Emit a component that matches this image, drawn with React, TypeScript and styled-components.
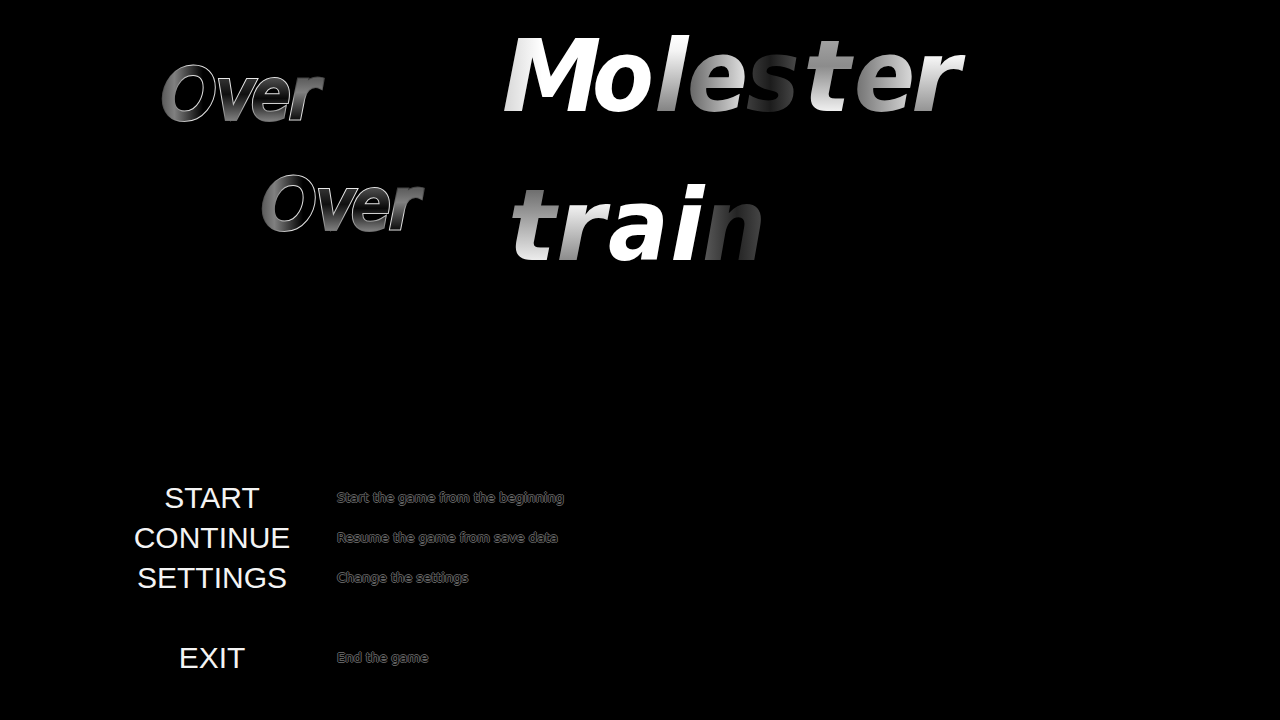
import React, { useId } from "react";
import styled, { createGlobalStyle } from "styled-components";

const GlobalStyle = createGlobalStyle`
  * { box-sizing: border-box; }
  html, body { margin: 0; background: #000; }
`;

const Screen = styled.main`
  display: flex;
  flex-direction: column;
  justify-content: space-between;
  min-height: 100vh;
  background: #000;
  color: #f4f4f4;
`;

const Header = styled.header`
  display: flex;
  gap: 50px;
  padding: 20px 0 0 150px;
`;

const Subtitle = styled.div`
  display: flex;
  flex-direction: column;
  gap: 20px;
  padding-top: 30px;
`;

const Title = styled.h1`
  display: flex;
  flex-direction: column;
  gap: 30px;
  margin: 0;
`;

const Wordmark = styled.svg<{ $indent?: number; $light?: boolean }>`
  display: block;
  overflow: visible;
  margin-left: ${(p) => p.$indent ?? 0}px;
  font-style: italic;
  font-weight: ${(p) => (p.$light ? 400 : 700)};
`;

const Glyph = styled.text<{ $wide?: boolean }>`
  font-family: ${(p) => (p.$wide ? '"DejaVu Sans"' : '"DejaVu Sans Condensed", "DejaVu Sans"')}, sans-serif;
  font-stretch: ${(p) => (p.$wide ? "normal" : "condensed")};
`;

const Menu = styled.nav`
  padding: 0 0 42px 112px;
`;

const Entry = styled.div<{ $spaced?: boolean }>`
  display: grid;
  grid-template-columns: 200px 1fr;
  column-gap: 25px;
  align-items: center;
  height: 40px;
  margin-top: ${(p) => (p.$spaced ? 40 : 0)}px;
`;

const Command = styled.button`
  border: 0;
  padding: 0;
  background: none;
  color: inherit;
  font: 30px/40px "Liberation Sans", Arial, sans-serif;
  cursor: pointer;
`;

const Hint = styled.span`
  color: #000;
  font: 400 13px/20px "DejaVu Sans", sans-serif;
  text-shadow: 1px 0 #606060, -1px 0 #606060, 0 1px #606060, 0 -1px #606060;
`;

type Stop = [number, string];
interface Letter {
  char: string;
  x: number;
  dir: "h" | "v";
  from: number;
  to: number;
  fill: Stop[];
  edge?: Stop[];
  wide?: boolean;
}

const Stops = ({ list }: { list: Stop[] }) => (
  <>
    {list.map(([offset, color]) => (
      <stop key={offset} offset={`${offset}%`} stopColor={color} />
    ))}
  </>
);

function Letters({ letters, size, baseline }: { letters: Letter[]; size: number; baseline: number }) {
  const id = useId();
  return (
    <>
      {letters.map((l, i) => {
        const span =
          l.dir === "h"
            ? { x1: l.from, x2: l.to, y1: 0, y2: 0 }
            : { x1: 0, x2: 0, y1: l.from, y2: l.to };
        const fill = `url(#${id}f${i})`;
        const glyph = { x: l.x, y: baseline, fontSize: size, $wide: l.wide };
        return (
          <g key={i}>
            <linearGradient id={`${id}f${i}`} gradientUnits="userSpaceOnUse" {...span}>
              <Stops list={l.fill} />
            </linearGradient>
            {l.edge && (
              <>
                <linearGradient id={`${id}e${i}`} gradientUnits="userSpaceOnUse" {...span}>
                  <Stops list={l.edge} />
                </linearGradient>
                <Glyph {...glyph} aria-hidden="true" fill="none" stroke={`url(#${id}e${i})`} strokeWidth={6}>
                  {l.char}
                </Glyph>
              </>
            )}
            <Glyph {...glyph} fill={fill} stroke={l.edge ? fill : "none"} strokeWidth={4}>
              {l.char}
            </Glyph>
          </g>
        );
      })}
    </>
  );
}

const WHITE: Stop[] = [[0, "#fff"], [100, "#fff"]];

const molester: Letter[] = [
  { char: "M", x: 12, wide: true, dir: "h", from: 15, to: 108, fill: [[0, "#d8d8d8"], [40, "#fff"]] },
  { char: "o", x: 102, dir: "h", from: 0, to: 1, fill: WHITE },
  { char: "l", x: 164, wide: true, dir: "v", from: 16, to: 91, fill: [[0, "#fff"], [20, "#f4f4f4"], [100, "#848484"]] },
  { char: "e", x: 197, dir: "h", from: 200, to: 255, fill: [[0, "#686868"], [100, "#e0e0e0"]] },
  { char: "s", x: 256, dir: "h", from: 255, to: 311, fill: [[0, "#404040"], [45, "#1c1c1c"], [100, "#505050"]] },
  { char: "t", x: 313, wide: true, dir: "v", from: 22, to: 91, fill: [[0, "#a0a0a0"], [35, "#8c8c8c"], [100, "#f0f0f0"]] },
  { char: "e", x: 364, dir: "h", from: 367, to: 422, fill: [[0, "#747474"], [100, "#d8d8d8"]] },
  { char: "r", x: 421, wide: true, dir: "v", from: 38, to: 91, fill: [[0, "#f4f4f4"], [100, "#949494"]] },
];

const train: Letter[] = [
  { char: "t", x: 18, wide: true, dir: "v", from: 21, to: 90, fill: [[0, "#707070"], [100, "#ececec"]] },
  { char: "r", x: 66, wide: true, dir: "v", from: 36, to: 90, fill: [[0, "#f0f0f0"], [100, "#8c8c8c"]] },
  { char: "a", x: 118, dir: "h", from: 0, to: 1, fill: WHITE },
  { char: "i", x: 180, wide: true, dir: "h", from: 0, to: 1, fill: WHITE },
  { char: "n", x: 212, dir: "h", from: 215, to: 273, fill: [[0, "#585858"], [55, "#242424"], [100, "#484848"]] },
];

const over: Letter[] = [
  {
    char: "O", x: 12, wide: true, dir: "h", from: 14, to: 66,
    fill: [[0, "#606060"], [20, "#808080"], [75, "#000"]],
    edge: [[0, "#505050"], [20, "#808080"], [50, "#e0e0e0"]],
  },
  {
    char: "v", x: 67, dir: "v", from: 30, to: 71,
    fill: [[0, "#303030"], [35, "#101010"], [100, "#808080"]],
    edge: [[0, "#e8e8e8"], [50, "#d0d0d0"], [100, "#707070"]],
  },
  {
    char: "e", x: 102, dir: "v", from: 30, to: 71,
    fill: [[0, "#484848"], [45, "#080808"], [100, "#808080"]],
    edge: [[0, "#e0e0e0"], [50, "#e0e0e0"], [100, "#707070"]],
  },
  {
    char: "r", x: 140, wide: true, dir: "v", from: 30, to: 71,
    fill: [[0, "#606060"], [30, "#808080"], [100, "#080808"]],
    edge: [[0, "#404040"], [30, "#707070"], [60, "#e0e0e0"]],
  },
];

const entries = [
  { label: "START", hint: "Start the game from the beginning" },
  { label: "CONTINUE", hint: "Resume the game from save data" },
  { label: "SETTINGS", hint: "Change the settings" },
  { label: "EXIT", hint: "End the game", spaced: true },
];

export default function App() {
  return (
    <>
      <GlobalStyle />
      <Screen>
        <Header>
          <Subtitle>
            <Wordmark width={190} height={90} $light>
              <Letters letters={over} size={68} baseline={68} />
            </Wordmark>
            <Wordmark width={190} height={90} $indent={100} $light>
              <Letters letters={over} size={68} baseline={68} />
            </Wordmark>
          </Subtitle>
          <Title>
            <Wordmark width={500} height={120}>
              <Letters letters={molester} size={100} baseline={91} />
            </Wordmark>
            <Wordmark width={500} height={120}>
              <Letters letters={train} size={100} baseline={90} />
            </Wordmark>
          </Title>
        </Header>
        <Menu>
          {entries.map((e, i) => (
            <Entry key={e.label} $spaced={e.spaced}>
              <Command type="button" aria-describedby={`hint-${i}`}>{e.label}</Command>
              <Hint id={`hint-${i}`}>{e.hint}</Hint>
            </Entry>
          ))}
        </Menu>
      </Screen>
    </>
  );
}
